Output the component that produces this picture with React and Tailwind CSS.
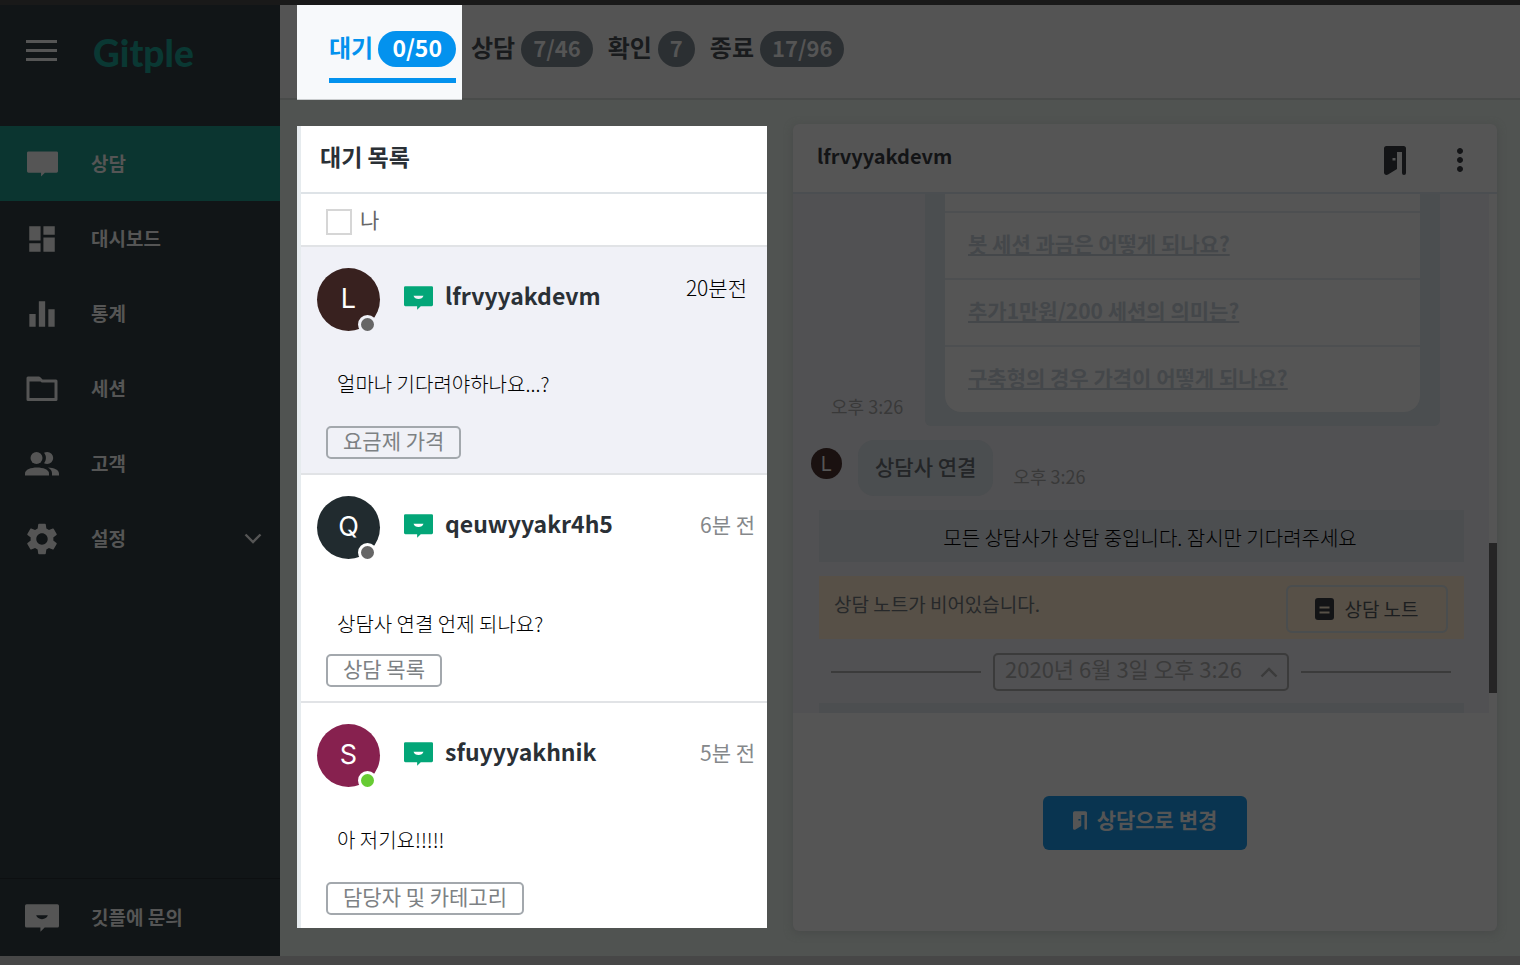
import React from 'react'
import clsx from 'clsx'
import { MdDashboard, MdEqualizer, MdSettings, MdMoreVert } from 'react-icons/md'

const ChatIcon = ({ className, smile }) => (
  <svg className={className} viewBox="0 0 32 26" fill="currentColor" aria-hidden="true">
    <path fillRule="evenodd" d={'M1.500 0h29A1.500 1.500 0 0 1 32 1.500v19A1.500 1.500 0 0 1 30.500 22H18.500L14.500 26V22H1.500A1.500 1.500 0 0 1 0 20.500V1.500A1.500 1.500 0 0 1 1.500 0z' + (smile ? 'M10.500 10.500h11c-.8 2.400-2.800 3.600-5.500 3.600s-4.700-1.200-5.500-3.600z' : '')} />
  </svg>
)

const MenuIcon = () => (
  <svg className="w-8 h-6" viewBox="0 0 32 24" fill="currentColor" aria-hidden="true">
    <path d="M1 1h31v3H1zM1 10h31v3H1zM1 19h31v3H1z" />
  </svg>
)

const FolderIcon = ({ className }) => (
  <svg className={className} viewBox="0 0 32 26" fill="none" stroke="currentColor" strokeWidth="3" strokeLinejoin="round" aria-hidden="true">
    <path d="M2 23.500V2h11l3 3h14v18.500z" />
    <path d="M2 4h12" />
  </svg>
)

const PeopleIcon = ({ className }) => (
  <svg className={className} viewBox="0 0 34 24" fill="currentColor" aria-hidden="true">
    <circle cx="11.500" cy="6" r="6" />
    <path d="M19 .8c1-.5 2-.8 3.200-.8a6 6 0 0 1 0 12c-1.200 0-2.200-.3-3.200-.8 2.600-3 2.600-7.400 0-10.400z" />
    <path d="M0 23.500v-2c0-4 6-6 12-6s12 2 12 6v2z" />
    <path d="M23 15.600c6 .4 11 2.400 11 5.900v2h-7v-2c0-2.500-1.500-4.500-4-5.900z" />
  </svg>
)

const DoorIcon = ({ className }) => (
  <svg className={className} viewBox="0 0 22 29" fill="currentColor" aria-hidden="true">
    <path fillRule="evenodd" d="M2.500 0h17A2.500 2.500 0 0 1 22 2.500V27a2 2 0 0 1-4 0V6h-5v17L4 28.600C2 29.500 0 28.500 0 26.500v-24A2.500 2.500 0 0 1 2.500 0zM8.500 12v2.600h3V12z" />
  </svg>
)

const NoteIcon = () => (
  <svg className="w-[19px] h-[22px]" viewBox="0 0 19 22" aria-hidden="true">
    <rect width="19" height="22" rx="3" fill="#131416" />
    <path d="M4.500 9.500h10M4.500 14.500h10" stroke="#575047" strokeWidth="2" />
  </svg>
)

const Chevron = ({ className }) => (
  <svg className={className} viewBox="0 0 18 11" fill="none" stroke="currentColor" strokeWidth="2.400" aria-hidden="true">
    <path d="M1.500 1.500 9 9l7.500-7.500" />
  </svg>
)

const menus = [
  { label: '상담', icon: <ChatIcon className="w-[31px] h-[26px]" />, active: true },
  { label: '대시보드', icon: <MdDashboard className="size-[34px]" /> },
  { label: '통계', icon: <MdEqualizer className="size-[38px]" /> },
  { label: '세션', icon: <FolderIcon className="w-8 h-[26px]" /> },
  { label: '고객', icon: <PeopleIcon className="w-[34px] h-6" /> },
  { label: '설정', icon: <MdSettings className="size-[38px]" />, more: true },
]

const tabs = [
  { label: '상담', count: '7/46' },
  { label: '확인', count: '7' },
  { label: '종료', count: '17/96' },
]

const waiting = [
  { name: 'lfrvyyakdevm', letter: 'L', time: '20분전', message: '얼마나 기다려야하나요...?', tag: '요금제 가격', avatar: 'bg-[#38211f]', dot: 'bg-[#666666]', selected: true },
  { name: 'qeuwyyakr4h5', letter: 'Q', time: '6분 전', message: '상담사 연결 언제 되나요?', tag: '상담 목록', avatar: 'bg-[#212b2f]', dot: 'bg-[#666666]', low: true },
  { name: 'sfuyyyakhnik', letter: 'S', time: '5분 전', message: '아 저기요!!!!!', tag: '담당자 및 카테고리', avatar: 'bg-[#87214f]', dot: 'bg-[#67cb33]' },
]

const questions = ['봇 세션 과금은 어떻게 되나요?', '추가1만원/200 세션의 의미는?', '구축형의 경우 가격이 어떻게 되나요?']

const Sidebar = () => (
  <aside className="flex w-[280px] shrink-0 flex-col bg-[#111517] text-[#555555]">
    <div className="flex h-[121px] items-start pt-[34px] pl-[25px]">
      <button type="button" aria-label="메뉴"><MenuIcon /></button>
      <h1 className="ml-9 font-['Lato'] text-[37px] leading-7 font-black text-[#0a3833]">Gitple</h1>
    </div>
    <nav className="flex-1">
      {menus.map((menu) => (
        <a key={menu.label} href="#" className={clsx('flex h-[75px] items-center pr-[18px] text-[19px] font-bold', menu.active && 'bg-[#0b3530]')}>
          <span className="flex w-[84px] justify-center">{menu.icon}</span>
          <span className="ml-[7px] flex-1">{menu.label}</span>
          {menu.more && <Chevron className="w-[18px] h-[11px]" />}
        </a>
      ))}
    </nav>
    <a href="#" className="flex h-[78px] items-center border-t border-[#0d0f11] text-[19px] font-bold">
      <span className="flex w-[84px] justify-center"><ChatIcon className="w-[34px] h-7" smile /></span>
      <span className="ml-[7px]">깃플에 문의</span>
    </a>
  </aside>
)

const Header = () => (
  <header className="flex h-[95px] shrink-0 items-start border-b-2 border-[#494b4a] bg-[#545454] pl-[17px]">
    <button type="button" className="h-[95px] w-[165px] border-b border-[#c9ccce] bg-[#f7f9fb] pr-[6px] pl-8">
      <span className="flex h-full flex-col pt-[26px]">
        <span className="flex h-9 items-center justify-between">
          <span className="pb-1 text-[24px] font-bold text-[#0392ee]">대기</span>
          <span className="flex h-9 items-center rounded-full bg-[#0392ee] px-[14px] pb-1 text-[23px] font-bold text-white">0/50</span>
        </span>
        <span className="mt-[11px] h-[5px] bg-[#0392ee]" />
      </span>
    </button>
    <div className="flex gap-[15px] pt-[26px] pl-[9px]">
      {tabs.map((tab) => (
        <button key={tab.label} type="button" className="flex h-9 items-center gap-[6px] text-[24px] font-bold text-[#191b1d]">
          <span className="pb-1">{tab.label}</span>
          <span className="flex h-9 items-center rounded-full bg-[#2b2f32] px-3 pb-1 text-[22px] text-[#555555]">{tab.count}</span>
        </button>
      ))}
    </div>
  </header>
)

const WaitingItem = ({ item }) => (
  <li className={clsx('flex h-[228px] flex-col items-start border-b-2 border-[#e1e3e6] pb-[14px] last:h-[225px] last:border-b-0 last:pb-[13px]', item.selected && 'bg-[#f0f1f7]')}>
    <div className="flex w-full pt-[21px] pl-4">
      <div className={clsx('relative flex size-[63px] items-center justify-center rounded-full font-["Inter"] text-[27px] text-white', item.avatar)}>
        {item.letter}
        <span className={clsx('absolute right-[3px] -bottom-[3px] size-[19px] rounded-full border-3', item.selected ? 'border-[#f0f1f7]' : 'border-white', item.dot)} />
      </div>
      <ChatIcon className="mt-[18px] ml-6 h-6 w-[29px] text-[#03a678]" smile />
      <strong className="ml-3 text-[23px] leading-[54px] font-bold text-[#2a3036]">{item.name}</strong>
      <time className={clsx('ml-auto text-[21px]', item.selected ? 'pr-5 leading-[38px] font-light text-black' : 'pr-3 leading-[56px] text-[#85888b]')}>{item.time}</time>
    </div>
    <p className={clsx('pl-9 text-[20px] leading-7 font-light text-black', item.low ? 'mt-[51px]' : 'mt-[39px]')}>{item.message}</p>
    <button type="button" className="mt-auto ml-[25px] flex h-[33px] items-start rounded-[5px] border-2 border-[#a3a8ad] px-[15px] text-[21px] leading-[25px] text-[#7d8184]">{item.tag}</button>
  </li>
)

const WaitingList = () => (
  <section className="mt-[26px] h-[802px] w-[470px] shrink-0 border-l-4 border-[#e6ebee] bg-white">
    <h2 className="h-[68px] border-b-2 border-[#dee3e7] pl-[19px] text-[23px] leading-[60px] font-bold text-[#2a3036]">대기 목록</h2>
    <label className="flex h-[53px] items-center gap-2 border-b-2 border-[#e1e3e6] pl-[25px] text-[21px] text-[#666666]">
      <input type="checkbox" className="mt-1 size-[26px] appearance-none border-2 border-[#d6d6d6] bg-white" />
      나
    </label>
    <ul>
      {waiting.map((item) => <WaitingItem key={item.name} item={item} />)}
    </ul>
  </section>
)

const ChatPanel = () => (
  <section className="mt-6 flex h-[807px] min-w-0 flex-1 flex-col overflow-hidden rounded-md bg-[#555555] shadow-[0_2px_8px_#484a49]">
    <div className="flex h-[70px] shrink-0 items-center border-b-2 border-[#4b4e51] pt-1 pr-[19px] pl-6 text-[#131416]">
      <h2 className="flex-1 pb-2 text-[20px] leading-8 font-bold">lfrvyyakdevm</h2>
      <button type="button" aria-label="상담 종료"><DoorIcon className="h-[29px] w-[22px]" /></button>
      <button type="button" aria-label="더보기" className="ml-9"><MdMoreVert className="size-9" /></button>
    </div>

    <div className="flex h-[519px] shrink-0">
      <div className="flex min-w-0 flex-1 flex-col overflow-hidden bg-[#515153]">
        <div className="flex items-end pr-[49px]">
          <time className="w-[132px] pb-[6px] pl-[38px] text-[18px] leading-7 text-[#393939]">오후 3:26</time>
          <div className="flex-1 rounded-b-md bg-[#4b4e50] px-5 pb-[14px]">
            <ul className="rounded-b-2xl bg-[#555555] pt-[17px]">
              {questions.map((question) => (
                <li key={question} className="h-[67px] border-t-2 border-[#4d4f51] pl-[23px] leading-[60px]">
                  <a href="#" className="text-[21px] font-bold text-[#44474a] underline decoration-2 underline-offset-2">{question}</a>
                </li>
              ))}
            </ul>
          </div>
        </div>

        <div className="mt-[14px] flex pl-[18px]">
          <span className="mt-2 flex size-[31px] items-center justify-center rounded-full bg-[#1a1110] font-['Inter'] text-[20px] text-[#555555]">L</span>
          <p className="ml-4 h-14 rounded-2xl bg-[#4b4e50] px-[17px] text-[21px] leading-[52px] font-medium text-[#232527]">상담사 연결</p>
          <time className="ml-5 text-[18px] leading-[73px] text-[#393939]">오후 3:26</time>
        </div>

        <p className="-mt-[3px] mr-[25px] ml-[26px] h-[52px] shrink-0 bg-[#4c4e50] pl-[17px] text-center text-[20px] leading-[56px] font-light text-black">모든 상담사가 상담 중입니다. 잠시만 기다려주세요</p>

        <div className="mt-[14px] mr-[25px] ml-[26px] flex h-[63px] shrink-0 justify-between bg-[#575047] pr-4 pl-[15px] text-[19px]">
          <p className="leading-[56px] text-[#26282a]">상담 노트가 비어있습니다.</p>
          <button type="button" className="mt-[9px] flex h-12 w-[162px] items-center justify-center gap-[10px] rounded-md border-2 border-[#4a4d4e] text-[#1c1e20]">
            <NoteIcon />
            상담 노트
          </button>
        </div>

        <div className="mt-[14px] mr-[38px] ml-[38px] flex h-[38px] shrink-0 items-center gap-3">
          <hr className="flex-1 border-t-2 border-[#3b3b3b]" />
          <button type="button" className="flex h-[38px] w-[296px] items-center justify-between rounded-[5px] border-2 border-[#3b3b3b] pr-[9px] pl-[10px] text-[#3b3b3b]">
            <span className="pb-2 text-[22px] leading-6">2020년 6월 3일 오후 3:26</span>
            <Chevron className="h-[11px] w-[18px] rotate-180" />
          </button>
          <hr className="flex-1 border-t-2 border-[#3b3b3b]" />
        </div>

        <div className="mt-3 mr-[25px] ml-[26px] h-3 shrink-0 bg-[#4c4e50]" />
      </div>
      <div className="w-2 pt-[349px]">
        <div className="h-[150px] bg-[#252525]" />
      </div>
    </div>

    <div className="flex flex-1 justify-center pt-[83px]">
      <button type="button" className="flex h-[54px] w-[204px] items-center justify-center gap-[10px] rounded-md bg-[#093450] pb-[6px] text-[21px] font-bold text-[#555555]">
        <DoorIcon className="h-[19px] w-[14px]" />
        상담으로 변경
      </button>
    </div>
  </section>
)

const App = () => (
  <div className="flex min-h-screen flex-col border-t-5 border-b-9 border-t-[#191919] border-b-[#474747] bg-[#505351] font-['Noto_Sans_CJK_KR',sans-serif]">
    <div className="flex flex-1">
      <Sidebar />
      <div className="flex min-w-0 flex-1 flex-col">
        <Header />
        <main className="flex gap-[26px] pr-[23px] pl-[17px]">
          <WaitingList />
          <ChatPanel />
        </main>
      </div>
    </div>
  </div>
)

export default App
